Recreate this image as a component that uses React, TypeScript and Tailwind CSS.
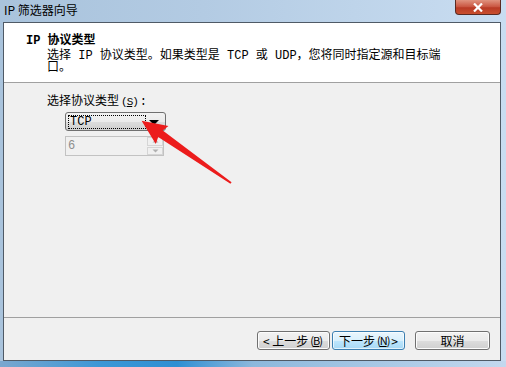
import React from 'react';

// IP 筛选器向导 — Windows 7 style wizard page
const font = "font-['Liberation_Mono','Noto_Sans_CJK_SC',monospace]";

const WinButton = ({ children, active }: { children: React.ReactNode; active?: boolean }) => (
  <div
    className={`h-[19px] flex items-center justify-center whitespace-nowrap rounded-[3px] border text-[12px] leading-none text-black font-['Noto_Sans_CJK_SC',sans-serif] ${
      active
        ? 'border-[#3c7fb1] bg-[linear-gradient(#eaf6fd_0%,#d9f0fc_50%,#bee6fd_51%,#a7d9f5_100%)] shadow-[inset_0_0_0_1px_#ffffffaa]'
        : 'border-[#707070] bg-[linear-gradient(#f2f2f2_0%,#ebebeb_50%,#dddddd_51%,#cfcfcf_100%)] shadow-[inset_0_0_0_1px_#fcfcfc]'
    }`}
  >
    {children}
  </div>
);

// accelerator key shown as "(X)" squeezed together
const Key = ({ k }: { k: string }) => (
  <span className="inline-flex items-center mx-[2px] tracking-[-1px] text-[11px]">(<span className="underline">{k}</span>)</span>
);

const App: React.FC = () => {
  return (
    <div className={`relative w-[506px] h-[367px] overflow-hidden flex flex-col bg-[linear-gradient(to_right,#a9c3dc,#b3cbe3_40%,#c9ddf1)] ${font}`}>
      {/* title bar */}
      <div className="h-[22px] flex items-start justify-between pl-[4px]">
        <span className="mt-[3px] text-[12px] leading-[14px] text-black font-['Noto_Sans_CJK_SC',sans-serif]">IP 筛选器向导</span>
        <div className="mr-[5px] w-[46px] h-[15px] rounded-b-[4px] border border-t-0 border-[#5a2a22] bg-[linear-gradient(#e0937f,#c9543f_50%,#b83a25_55%,#c94f2e)] flex items-center justify-center">
          <svg width="10" height="9" viewBox="0 0 10 9">
            <path d="M1 0.5 L9 8.5 M9 0.5 L1 8.5" stroke="#ffffff" strokeWidth="2.2" />
          </svg>
        </div>
      </div>

      {/* window body */}
      <div className="mx-[3px] mr-[5px] h-[339px] border border-[#4f5a66] flex flex-col bg-[#f0f0f0]">
        {/* header */}
        <div className="h-[60px] bg-white border-b border-[#a0a0a0] pt-[11px] pl-[22px]">
          <div className="text-[12px] leading-[14px] font-bold text-black">IP 协议类型</div>
          <div className="pl-[21px] pt-[2px] text-[12px] leading-[12px] text-black w-[420px]">
            选择 IP 协议类型。如果类型是 TCP 或 UDP，您将同时指定源和目标端口。
          </div>
        </div>

        {/* content */}
        <div className="flex-1 pt-[12px] pl-[43px]">
          <div className="text-[12px] leading-[14px] text-black flex items-center">选择协议类型<Key k="S" />:</div>
          <div className="ml-[18px] mt-[3px] w-[101px]">
            <div className="h-[19px] rounded-[3px] border border-[#707070] bg-[linear-gradient(#f2f2f2_0%,#ebebeb_50%,#dddddd_51%,#cfcfcf_100%)] flex items-center pl-[2px] pr-[4px]">
              <div className="flex-1 h-[14px] border border-dotted border-black text-[12px] leading-[12px] pl-[1px] text-black">TCP</div>
              <svg width="14" height="10" viewBox="0 0 14 10" className="ml-[1px]">
                <path d="M2 3 L12 3 L7 8 Z" fill="#000" />
              </svg>
            </div>
            <div className="mt-[5px] h-[20px] w-[99px] border border-[#c2c2c2] bg-[#f0f0f0] flex">
              <div className="flex-1 text-[12px] leading-[18px] pl-[2px] text-[#8d8d8d]">6</div>
              <div className="w-[16px] flex flex-col gap-[1px]">
                <div className="flex-1 border border-[#d5d5d5] flex items-center justify-center">
                  <svg width="7" height="4" viewBox="0 0 7 4"><path d="M0.5 3.5 L3.5 0.5 L6.5 3.5 Z" fill="#b0b0b0" /></svg>
                </div>
                <div className="flex-1 border border-[#d5d5d5] flex items-center justify-center">
                  <svg width="7" height="4" viewBox="0 0 7 4"><path d="M0.5 0.5 L3.5 3.5 L6.5 0.5 Z" fill="#b0b0b0" /></svg>
                </div>
              </div>
            </div>
          </div>
        </div>

        {/* footer */}
        <div className="h-[43px] border-t border-[#a0a0a0] flex items-start pt-[13px] pl-[253px] gap-[2px]">
          <div className="w-[73px]"><WinButton>&lt; 上一步<Key k="B" /></WinButton></div>
          <div className="w-[73px]"><WinButton active>下一步<Key k="N" /> &gt;</WinButton></div>
          <div className="w-[75px] ml-[8px]"><WinButton>取消</WinButton></div>
        </div>
      </div>

      <div className="flex-1 bg-[linear-gradient(to_right,#7aa7cf,#3b97d6_20%,#2f8fd3_35%,#8cb8dc_50%,#c3d8ee)]" />

      {/* red annotation arrow */}
      <svg className="absolute left-0 top-0" width="506" height="367" viewBox="0 0 506 367">
        <g transform="translate(231,183) rotate(-145.1)">
          <polygon points="0,-1 86,-4 84,-11 109,0 84,11 86,4 0,1" fill="#ec1c1c" />
        </g>
      </svg>
    </div>
  );
};

export default App;
